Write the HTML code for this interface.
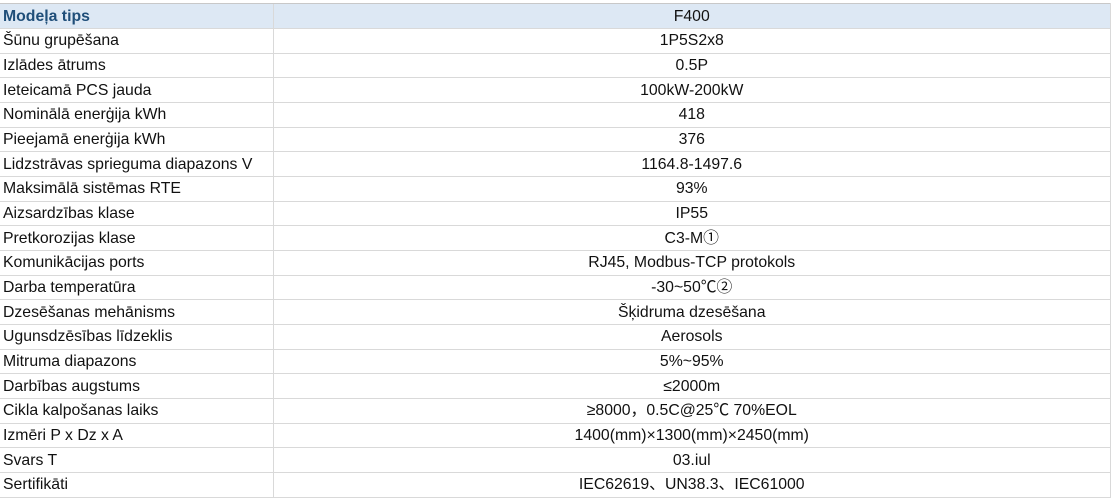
<!DOCTYPE html>
<html><head><meta charset="utf-8"><style>
body{margin:0;width:1113px;height:502px;background:#fff;overflow:hidden;font-family:"Liberation Sans","Noto Sans CJK SC",sans-serif;font-size:15.8px;color:#111;}
table{position:absolute;left:0;top:3px;border-collapse:collapse;table-layout:fixed;width:1111px;}
td{height:23.68px;padding:0 0 0 3px;border-bottom:1px solid #d9d9d9;white-space:nowrap;line-height:23px;overflow:hidden;}
td.v{text-align:center;border-left:1px solid #d9d9d9;border-right:1px solid #d9d9d9;padding:0;}
tr.h td{background:#dde8f4;color:#1f4e79;font-weight:bold;border-top:1px solid #c8c8c8;height:24px;}
tr.h td.v{font-weight:normal;color:#111;}
</style></head><body>
<table>
<col style="width:273px"><col>
<tr class="h"><td>Modeļa tips</td><td class="v">F400</td></tr>
<tr><td>Šūnu grupēšana</td><td class="v">1P5S2x8</td></tr>
<tr><td>Izlādes ātrums</td><td class="v">0.5P</td></tr>
<tr><td>Ieteicamā PCS jauda</td><td class="v">100kW-200kW</td></tr>
<tr><td>Nominālā enerģija kWh</td><td class="v">418</td></tr>
<tr><td>Pieejamā enerģija kWh</td><td class="v">376</td></tr>
<tr><td>Lidzstrāvas sprieguma diapazons V</td><td class="v">1164.8-1497.6</td></tr>
<tr><td>Maksimālā sistēmas RTE</td><td class="v">93%</td></tr>
<tr><td>Aizsardzības klase</td><td class="v">IP55</td></tr>
<tr><td>Pretkorozijas klase</td><td class="v">C3-M①</td></tr>
<tr><td>Komunikācijas ports</td><td class="v">RJ45, Modbus-TCP protokols</td></tr>
<tr><td>Darba temperatūra</td><td class="v">-30~50℃②</td></tr>
<tr><td>Dzesēšanas mehānisms</td><td class="v">Šķidruma dzesēšana</td></tr>
<tr><td>Ugunsdzēsības līdzeklis</td><td class="v">Aerosols</td></tr>
<tr><td>Mitruma diapazons</td><td class="v">5%~95%</td></tr>
<tr><td>Darbības augstums</td><td class="v">≤2000m</td></tr>
<tr><td>Cikla kalpošanas laiks</td><td class="v">≥8000，0.5C@25℃ 70%EOL</td></tr>
<tr><td>Izmēri P x Dz x A</td><td class="v">1400(mm)×1300(mm)×2450(mm)</td></tr>
<tr><td>Svars T</td><td class="v">03.iul</td></tr>
<tr><td>Sertifikāti</td><td class="v">IEC62619、UN38.3、IEC61000</td></tr>
</table>
</body></html>
